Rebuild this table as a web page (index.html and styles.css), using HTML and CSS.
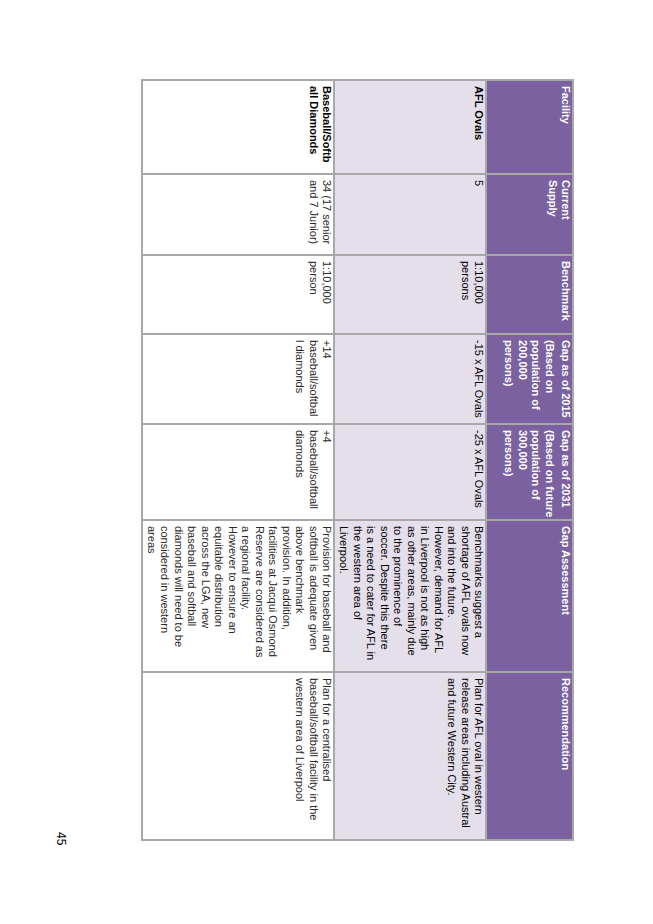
FILE: index.html
```html
<!DOCTYPE html>
<html>
<head>
<meta charset="utf-8">
<link rel="stylesheet" href="styles.css">
</head>
<body>
<div class="page">
  <table class="grid">
    <colgroup>
      <col class="c1"><col class="c2"><col class="c3"><col class="c4"><col class="c5"><col class="c6"><col class="c7">
    </colgroup>
    <tr class="head">
      <th>Facility</th>
      <th>Current<br>Supply</th>
      <th>Benchmark</th>
      <th><div class="hp">Gap as of 2015</div><div>(Based on<br>population of<br>200,000<br>persons)</div></th>
      <th><div class="hp">Gap as of 2031</div><div>(Based on future<br>population of<br>300,000<br>persons)</div></th>
      <th>Gap Assessment</th>
      <th>Recommendation</th>
    </tr>
    <tr class="row-afl">
      <td class="name">AFL Ovals</td>
      <td>5</td>
      <td>1:10,000<br>persons</td>
      <td>-15 x AFL Ovals</td>
      <td>-25 x AFL Ovals</td>
      <td>Benchmarks suggest a<br>shortage of AFL ovals now<br>and into the future.<br>However, demand for AFL<br>in Liverpool is not as high<br>as other areas, mainly due<br>to the prominence of<br>soccer.  Despite this there<br>is a need to cater for AFL in<br>the western area of<br>Liverpool.</td>
      <td>Plan for AFL oval in western<br>release areas including Austral<br>and future Western City.</td>
    </tr>
    <tr class="row-base">
      <td class="name">Baseball/Softb<br>all Diamonds</td>
      <td>34 (17 senior<br>and 7 Junior)</td>
      <td>1:10,000<br>person</td>
      <td>+14<br>baseball/softbal<br>l diamonds</td>
      <td>+4<br>baseball/softball<br>diamonds</td>
      <td>Provision for baseball and<br>softball is adequate given<br>above benchmark<br>provision.  In addition,<br>facilities at Jacqui Osmond<br>Reserve are considered as<br>a regional facility.<br>However to ensure an<br>equitable distribution<br>across the LGA, new<br>baseball and softball<br>diamonds will need to be<br>considered in western<br>areas</td>
      <td>Plan for a centralised<br>baseball/softball facility in the<br>western area of Liverpool</td>
    </tr>
  </table>
  <div class="pagenum">45</div>
</div>
</body>
</html>
```
FILE: styles.css
```css
html, body {
  margin: 0;
  padding: 0;
  background: #ffffff;
}
body {
  width: 653px;
  height: 924px;
  overflow: hidden;
}
.page {
  writing-mode: vertical-rl;
  width: 653px;
  height: 924px;
  box-sizing: border-box;
  padding-block-start: 79px;
  padding-inline-start: 79px;
  padding-inline-end: 79px;
  font-family: "Liberation Sans", Arial, sans-serif;
  font-size: 11px;
  line-height: 13.5px;
  color: #000;
}
.grid {
  border-collapse: collapse;
  table-layout: fixed;
  inline-size: 760px;
}
.c1 { inline-size: 94px; }
.c2 { inline-size: 81px; }
.c3 { inline-size: 79px; }
.c4 { inline-size: 90px; }
.c5 { inline-size: 96px; }
.c6 { inline-size: 152px; }
.c7 { inline-size: 168px; }
.grid th, .grid td {
  border: 2px solid #a8a8a8;
  vertical-align: top;
  text-align: start;
  padding-block: 0;
  padding-inline-start: 5px;
  padding-inline-end: 3px;
  overflow: hidden;
  white-space: nowrap;
}
.head th {
  background: #7b61a0;
  color: #ffffff;
  font-weight: bold;
  block-size: 85px;
}
.hp {
  margin-block-end: 3px;
}
.row-afl td {
  background: #e5dfec;
  block-size: 150px;
}
.row-base td {
  background: #ffffff;
  color: #2a2a2a;
  block-size: 190px;
}
.name {
  font-weight: bold;
}
.row-base .name {
  color: #000;
}
.pagenum {
  margin-block-start: 74px;
  text-align: end;
  font-size: 12px;
}
```
